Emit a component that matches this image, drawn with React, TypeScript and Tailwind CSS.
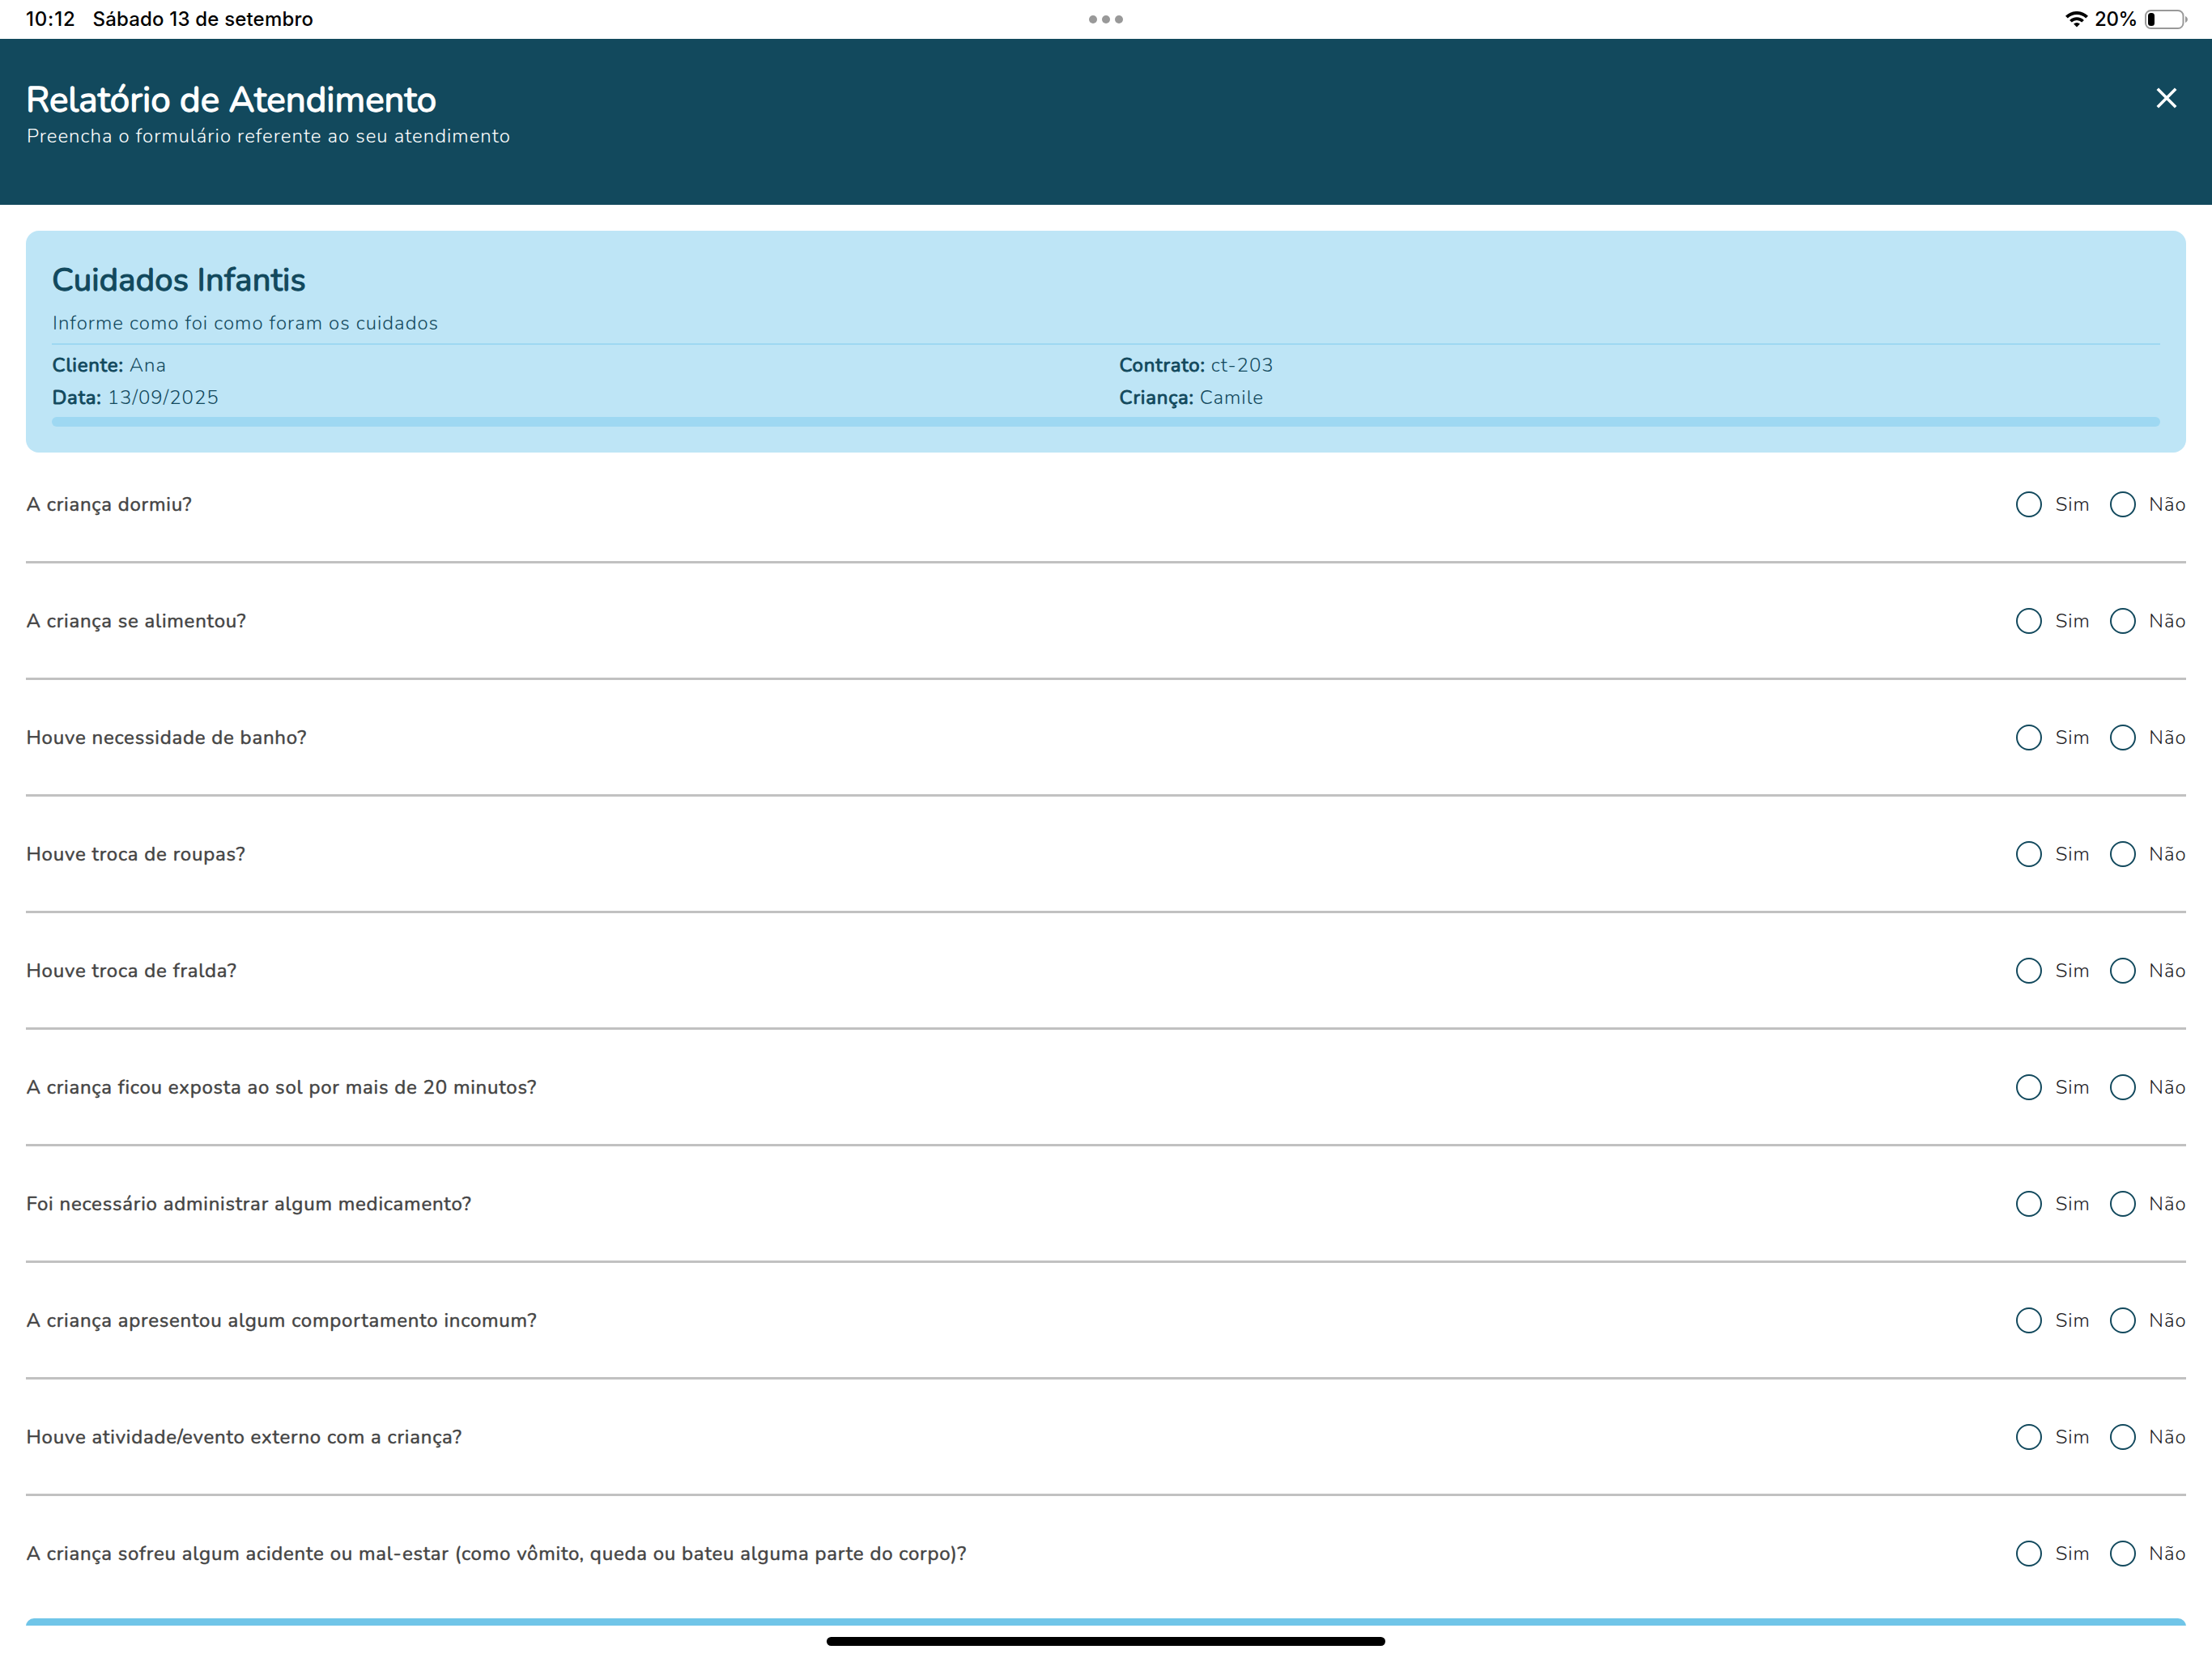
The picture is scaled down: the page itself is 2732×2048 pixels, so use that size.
import React from 'react';

const questions = [
  'A criança dormiu?',
  'A criança se alimentou?',
  'Houve necessidade de banho?',
  'Houve troca de roupas?',
  'Houve troca de fralda?',
  'A criança ficou exposta ao sol por mais de 20 minutos?',
  'Foi necessário administrar algum medicamento?',
  'A criança apresentou algum comportamento incomum?',
  'Houve atividade/evento externo com a criança?',
  'A criança sofreu algum acidente ou mal-estar (como vômito, queda ou bateu alguma parte do corpo)?',
];

const StatusBar: React.FC = () => (
  <div className="grid h-12 grid-cols-3 items-center bg-white pl-8 pr-[30px] font-['Inter',sans-serif] text-2xl font-medium text-black">
    <div className="flex items-center gap-[21px]">
      <span className="tracking-[0.8px]">10:12</span>
      <span className="tracking-[0.18px]">Sábado 13 de setembro</span>
    </div>
    <div className="flex justify-center gap-1.5 pr-0.5">
      <span className="size-2.5 rounded-full bg-[#999999]" />
      <span className="size-2.5 rounded-full bg-[#999999]" />
      <span className="size-2.5 rounded-full bg-[#999999]" />
    </div>
    <div className="flex items-center justify-end">
      <svg className="mr-2 h-5 w-7" viewBox="0 0 28 20" fill="none" stroke="#000">
        <path d="M1.4 7.2a17.8 17.8 0 0 1 25.2 0" strokeWidth="4" />
        <path d="M6.44 12.24a10.7 10.7 0 0 1 15.12 0" strokeWidth="3.8" />
        <path d="M14 19.6l-3.9-4a5.6 5.6 0 0 1 7.8 0z" fill="#000" stroke="none" />
      </svg>
      <span className="mr-[9px] tracking-[-0.39px]">20%</span>
      <svg className="h-6 w-[53px]" viewBox="0 0 53 24" fill="none">
        <rect x="1" y="1" width="46.5" height="22" rx="6.5" stroke="#999" strokeWidth="2" />
        <rect x="4" y="4" width="8" height="16" rx="3.5" fill="#000" />
        <path d="M50 8c3.9 1.6 3.9 6.4 0 8z" fill="#999" />
      </svg>
    </div>
  </div>
);

const Header: React.FC = () => (
  <header className="flex h-[205px] items-start justify-between bg-[#12495d] px-8 pt-12 text-white">
    <div>
      <h1 className="text-[44px] leading-[56px] [-webkit-text-stroke:1.3px]">Relatório de Atendimento</h1>
      <p className="pl-px text-2xl font-light tracking-[1px]">Preencha o formulário referente ao seu atendimento</p>
    </div>
    <button className="mr-[11px] mt-3" aria-label="Fechar">
      <svg className="size-[26px]" viewBox="0 0 26 26" fill="none" stroke="currentColor" strokeWidth="3.6">
        <path d="M1.8 1.8l22.4 22.4M24.2 1.8L1.8 24.2" />
      </svg>
    </button>
  </header>
);

const Info: React.FC<{ label: string; value: string }> = ({ label, value }) => (
  <p className="pl-[0.5px] text-2xl font-light leading-10 tracking-[1px]">
    <span className="font-normal tracking-[0.8px] [-webkit-text-stroke:0.95px]">{label}: </span>
    {value}
  </p>
);

const SummaryCard: React.FC = () => (
  <section className="h-[274px] rounded-2xl bg-[#bee5f6] px-8 pt-[33px] text-[#12495d]">
    <h2 className="text-[40px] leading-[56px] tracking-[0.2px] [-webkit-text-stroke:1.25px]">Cuidados Infantis</h2>
    <p className="mt-[9px] pl-px text-2xl font-light tracking-[1px]">Informe como foi como foram os cuidados</p>
    <div className="mt-[9px] h-0.5 bg-[#9ed8f2]" />
    <div className="mt-[5px] grid grid-cols-2 gap-x-8">
      <Info label="Cliente" value="Ana" />
      <Info label="Contrato" value="ct-203" />
      <Info label="Data" value="13/09/2025" />
      <Info label="Criança" value="Camile" />
    </div>
    <div className="mt-1 h-3 rounded-full bg-[#9ed8f2]" />
  </section>
);

const Option: React.FC<{ label: string }> = ({ label }) => (
  <label className="flex items-center gap-[16.5px]">
    <span className="size-8 rounded-full border-2 border-[#12495d]" />
    <span className="text-2xl font-light tracking-[1px] text-[#1c1b1f]">{label}</span>
  </label>
);

const Question: React.FC<{ text: string }> = ({ text }) => (
  <div className="flex h-16 items-center justify-between">
    <p className="pl-[0.5px] text-2xl tracking-[0.79px] text-[#444444] [-webkit-text-stroke:0.5px]">{text}</p>
    <div className="-mr-[0.7px] flex gap-6">
      <Option label="Sim" />
      <Option label="Não" />
    </div>
  </div>
);

const App: React.FC = () => {
  return (
    <div className="flex h-[2048px] w-[2732px] flex-col overflow-hidden bg-white font-['Nunito','Lato',sans-serif]">
      <StatusBar />
      <Header />
      <main className="h-[1755px] overflow-hidden px-8 pt-8">
        <SummaryCard />
        <div className="mt-8">
          {questions.map((text, i) => (
            <React.Fragment key={text}>
              {i > 0 && <div className="mb-[39px] mt-[38px] h-[3px] bg-[#c1c1c1]" />}
              <Question text={text} />
            </React.Fragment>
          ))}
        </div>
        <div className="mt-12 h-24 rounded-[10px] bg-[#70c5e8]" />
      </main>
      <div className="mx-auto mt-3.5 h-[11px] w-[690px] rounded-full bg-black" />
    </div>
  );
};

export default App;
